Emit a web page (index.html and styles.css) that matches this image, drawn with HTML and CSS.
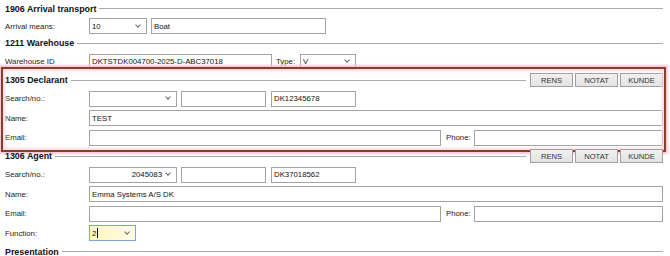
FILE: index.html
```html
<!DOCTYPE html>
<html lang="en">
<head>
<meta charset="utf-8">
<title>Declaration</title>
<link rel="stylesheet" href="styles.css">
</head>
<body>
<div class="form">

  <section class="group">
    <div class="group-head"><span class="group-title">1906 Arrival transport</span><span class="group-rule"></span></div>
    <div class="row row-compact">
      <span class="lbl">Arrival means:</span>
      <div class="box select w-58"><span>10</span><i class="chev"></i></div>
      <div class="box w-175 ml-4">Boat</div>
    </div>
  </section>

  <section class="group">
    <div class="group-head"><span class="group-title">1211 Warehouse</span><span class="group-rule"></span></div>
    <div class="row">
      <span class="lbl">Warehouse ID</span>
      <div class="box w-183">DKTSTDK004700-2025-D-ABC37018</div>
      <span class="lbl-inline lbl-type">Type:</span>
      <div class="box select w-56"><span>V</span><i class="chev"></i></div>
    </div>
  </section>

  <section class="group group-highlight">
    <div class="group-head">
      <span class="group-title">1305 Declarant</span><span class="group-rule"></span>
      <div class="btns"><span class="btn">RENS</span><span class="btn">NOTAT</span><span class="btn">KUNDE</span></div>
    </div>
    <div class="row">
      <span class="lbl">Search/no.:</span>
      <div class="box select w-88"><span></span><i class="chev"></i></div>
      <div class="box w-85 ml-4"></div>
      <div class="box w-85 ml-5">DK12345678</div>
    </div>
    <div class="row">
      <span class="lbl">Name:</span>
      <div class="box grow">TEST</div>
    </div>
    <div class="row">
      <span class="lbl">Email:</span>
      <div class="box w-352"></div>
      <span class="lbl-inline lbl-phone">Phone:</span>
      <div class="box grow"></div>
    </div>
  </section>

  <section class="group">
    <div class="group-head">
      <span class="group-title">1306 Agent</span><span class="group-rule"></span>
      <div class="btns"><span class="btn">RENS</span><span class="btn">NOTAT</span><span class="btn">KUNDE</span></div>
    </div>
    <div class="row">
      <span class="lbl">Search/no.:</span>
      <div class="box select select-right w-88"><span>2045083</span><i class="chev"></i></div>
      <div class="box w-85 ml-4"></div>
      <div class="box w-85 ml-5">DK37018562</div>
    </div>
    <div class="row">
      <span class="lbl">Name:</span>
      <div class="box grow">Emma Systems A/S DK</div>
    </div>
    <div class="row">
      <span class="lbl">Email:</span>
      <div class="box w-352"></div>
      <span class="lbl-inline lbl-phone">Phone:</span>
      <div class="box grow"></div>
    </div>
    <div class="row">
      <span class="lbl">Function:</span>
      <div class="box select select-focus w-47"><span>2<i class="caret"></i></span><i class="chev"></i></div>
    </div>
  </section>

  <section class="group">
    <div class="group-head"><span class="group-title">Presentation</span><span class="group-rule"></span></div>
  </section>

</div>
</body>
</html>
```
FILE: styles.css
```css
* { box-sizing: border-box; }

body {
  margin: 0;
  background: #fff;
  font-family: "Liberation Sans", Arial, sans-serif;
  font-size: 7.8px;
  color: #222;
}

.form {
  width: 670px;
  padding: 0 7px 0 5px;
}

.group { position: relative; }

.group-head {
  display: flex;
  align-items: center;
  height: 17.5px;
}

.group-title {
  font-weight: bold;
  font-size: 8.9px;
  color: #111;
  white-space: nowrap;
}

.group-rule {
  flex: 1;
  height: 0;
  margin-left: 3px;
  border-top: 1px solid #a9a9a9;
}

.btns {
  display: flex;
  gap: 2px;
  margin-left: 4px;
}

.btn {
  width: 43px;
  height: 14px;
  display: flex;
  align-items: center;
  justify-content: center;
  border: 1px solid #a0a0a0;
  background: linear-gradient(#f0f0f0, #e3e3e3);
  color: #333;
  font-size: 7.6px;
}

.row {
  display: flex;
  align-items: center;
  height: 19.5px;
}
.row-compact { height: 17px; }

.lbl {
  width: 84px;
  flex: none;
  white-space: nowrap;
}

.lbl-inline { flex: none; white-space: nowrap; }
.lbl-type { width: 24px; margin-left: 4px; }
.lbl-phone { width: 28px; margin-left: 5px; }

.box {
  height: 16px;
  flex: none;
  display: flex;
  align-items: center;
  padding: 0 2px;
  border: 1px solid #a3a3a3;
  background: #fff;
  color: #111;
  white-space: nowrap;
  overflow: hidden;
}
.grow { flex: 1; }

.select { justify-content: space-between; }
.select-right { justify-content: flex-end; gap: 4px; }

.chev {
  width: 4px;
  height: 4px;
  margin: -3px 4px 0 0;
  border-right: 1px solid #666;
  border-bottom: 1px solid #666;
  transform: rotate(45deg);
  flex: none;
}

.select-focus {
  border-color: #7fa3d3;
  background: linear-gradient(to right, #fff6b8, #fffde9);
}

.caret {
  display: inline-block;
  width: 1px;
  height: 10px;
  margin-left: 1px;
  vertical-align: -2px;
  background: #000;
}

.w-47 { width: 47px; }
.w-56 { width: 56px; }
.w-58 { width: 58px; }
.w-85 { width: 85px; }
.w-88 { width: 88px; }
.w-175 { width: 175px; }
.w-183 { width: 183px; }
.w-352 { width: 352px; }
.ml-4 { margin-left: 4px; }
.ml-5 { margin-left: 5px; }

.group-highlight::after {
  content: "";
  position: absolute;
  top: -4.5px;
  left: -4px;
  right: -3px;
  bottom: -4px;
  border: 2px solid #84402c;
  box-shadow: 0 0 2px 2px #f7c6d1, inset 0 0 3px 2px #fcd9e1;
  pointer-events: none;
}
```
